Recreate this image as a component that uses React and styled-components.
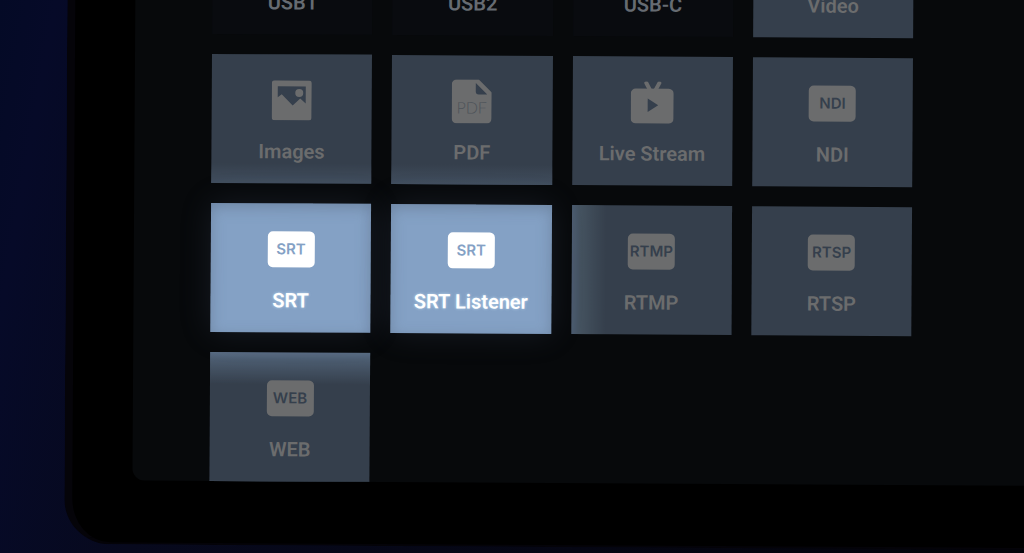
import React from 'react';
import styled, { createGlobalStyle, css } from 'styled-components';
import { MdUsb, MdMovie } from 'react-icons/md';

const GlobalStyle = createGlobalStyle`
  body {
    margin: 0;
    background: #050a26;
    font-family: Roboto, 'Liberation Sans', sans-serif;
  }
`;

const Desk = styled.main`
  display: flex;
  align-items: flex-end;
  box-sizing: border-box;
  height: 100vh;
  padding: 0 0 9px 64px;
  overflow: hidden;
  background: linear-gradient(100deg, #040a26 0%, #060a28 5%, #07091d 20%, #030309 100%);
`;

/* the tablet lies slightly askew on the desk */
const Tablet = styled.div`
  flex: 1;
  margin-right: -16px;
  padding: 16px 0 62px 60px;
  border-left: 8px solid #050409;
  border-bottom: 2px solid #040308;
  border-radius: 0 0 0 46px;
  background: #000;
  transform: rotate(0.35deg);
  transform-origin: left bottom;
`;

const Screen = styled.div`
  padding: 24px 130px 0 77px;
  border-radius: 0 0 0 12px;
  background: #07090b;
`;

const SourceGrid = styled.div`
  display: grid;
  grid-template-columns: repeat(4, minmax(0, 1fr));
  gap: 20px;
`;

const spills = {
  top: 'linear-gradient(to bottom, #586b82 0, #4a5a6d 9px, rgba(53, 63, 76, 0) 32px)',
  left: 'linear-gradient(to right, #4b5b6f 0, #44525f 9px, rgba(53, 63, 76, 0) 34px)',
  bottom: 'linear-gradient(to top, #414e5e 0, rgba(53, 63, 76, 0) 20px)',
};

const variants = {
  off: css`
    --tile: #090b0f;
    --ink: #666b72;
  `,
  dim: css`
    --tile: #353f4c;
    --ink: #6b6c6d;
  `,
  lit: css`
    --tile: #84a1c5;
    --ink: #fff;
    z-index: 1;
    box-shadow: 0 0 32px rgba(100, 115, 150, 0.17), inset 0 4px 14px rgba(96, 116, 142, 0.6);
    text-shadow: 0 0 3px rgba(205, 235, 255, 0.7);
  `,
};

const Tile = styled.button`
  display: flex;
  flex-direction: column;
  align-items: center;
  gap: 17px;
  position: relative;
  padding: 24px 0 20px;
  border: 0;
  ${({ $variant }) => variants[$variant]}
  background: ${({ $spill }) => ($spill ? `${spills[$spill]}, ` : '')} var(--tile);
  color: var(--ink);
  font: 600 20px/24px Roboto, 'Liberation Sans', sans-serif;
  cursor: pointer;
`;

const IconBox = styled.span`
  display: flex;
  align-items: center;
  justify-content: center;
  height: 44px;
`;

const Badge = styled.span`
  display: flex;
  align-items: center;
  justify-content: center;
  width: 47px;
  height: 36px;
  border-radius: 5px;
  background: var(--ink);
  color: var(--tile);
  font: 600 15px/36px Inter, 'Liberation Sans', sans-serif;
  text-shadow: none;
`;

const ImageIcon = () => (
  <svg width="40" height="40" viewBox="0 0 40 40" aria-hidden="true">
    <rect width="40" height="40" rx="3" fill="var(--ink)" />
    <path
      d="M6 6H34V23L28.500 18L21 25L10 14L6 17Z"
      fill="var(--tile)"
    />
    <circle cx="27.500" cy="12.500" r="4" fill="var(--ink)" />
  </svg>
);

const PdfIcon = () => (
  <svg width="40" height="44" viewBox="0 0 40 44" aria-hidden="true">
    <path
      d="M5 0H27L40 13V39a5 5 0 0 1-5 5H5a5 5 0 0 1-5-5V5a5 5 0 0 1 5-5Z"
      fill="var(--ink)"
    />
    <path d="M24 3.500L35.500 15H27a3 3 0 0 1-3-3Z" fill="var(--tile)" />
    <text
      x="20"
      y="34"
      textAnchor="middle"
      fontFamily="Lato, sans-serif"
      fontWeight="300"
      fontSize="16"
      fill="#4d5359"
    >
      PDF
    </text>
  </svg>
);

const LiveIcon = () => (
  <svg width="43" height="42" viewBox="0 0 43 42" aria-hidden="true">
    <path
      d="M15.500 1.500L19 8M28.500 1.500L25 8"
      stroke="var(--ink)"
      strokeWidth="4"
      strokeLinecap="round"
    />
    <rect y="7" width="43" height="35" rx="5" fill="var(--ink)" />
    <path d="M17 17V30.500L27.500 23.700Z" fill="var(--tile)" />
  </svg>
);

const sources = [
  { label: 'USB1', icon: <MdUsb size={44} />, variant: 'off' },
  { label: 'USB2', icon: <MdUsb size={44} />, variant: 'off' },
  { label: 'USB-C', icon: <MdUsb size={44} />, variant: 'off' },
  { label: 'Video', icon: <MdMovie size={44} /> },
  { label: 'Images', icon: <ImageIcon />, spill: 'bottom' },
  { label: 'PDF', icon: <PdfIcon />, spill: 'bottom' },
  { label: 'Live Stream', icon: <LiveIcon /> },
  { label: 'NDI', badge: 'NDI' },
  { label: 'SRT', badge: 'SRT', variant: 'lit' },
  { label: 'SRT Listener', badge: 'SRT', variant: 'lit' },
  { label: 'RTMP', badge: 'RTMP', spill: 'left' },
  { label: 'RTSP', badge: 'RTSP' },
  { label: 'WEB', badge: 'WEB', spill: 'top' },
];

const SourceTile = ({ label, icon, badge, variant = 'dim', spill }) => (
  <Tile type="button" $variant={variant} $spill={spill}>
    <IconBox>{badge ? <Badge>{badge}</Badge> : icon}</IconBox>
    <span>{label}</span>
  </Tile>
);

const App = () => (
  <>
    <GlobalStyle />
    <Desk>
      <Tablet>
        <Screen>
          <SourceGrid>
            {sources.map((source) => (
              <SourceTile key={source.label} {...source} />
            ))}
          </SourceGrid>
        </Screen>
      </Tablet>
    </Desk>
  </>
);

export default App;
